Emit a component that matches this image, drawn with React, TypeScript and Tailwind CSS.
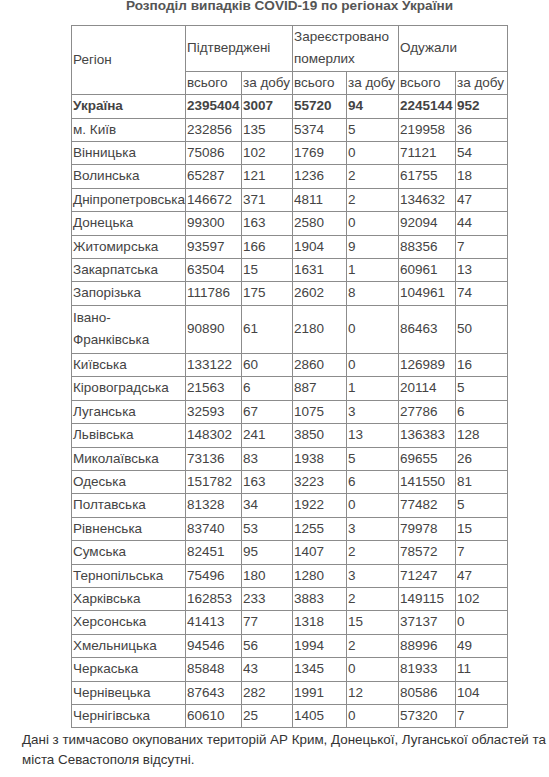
import React from 'react';

type Row = [string, number, number, number, number, number, number];

const rows: Row[] = [
  ['м. Київ', 232856, 135, 5374, 5, 219958, 36],
  ['Вінницька', 75086, 102, 1769, 0, 71121, 54],
  ['Волинська', 65287, 121, 1236, 2, 61755, 18],
  ['Дніпропетровська', 146672, 371, 4811, 2, 134632, 47],
  ['Донецька', 99300, 163, 2580, 0, 92094, 44],
  ['Житомирська', 93597, 166, 1904, 9, 88356, 7],
  ['Закарпатська', 63504, 15, 1631, 1, 60961, 13],
  ['Запорізька', 111786, 175, 2602, 8, 104961, 74],
  ['Івано-Франківська', 90890, 61, 2180, 0, 86463, 50],
  ['Київська', 133122, 60, 2860, 0, 126989, 16],
  ['Кіровоградська', 21563, 6, 887, 1, 20114, 5],
  ['Луганська', 32593, 67, 1075, 3, 27786, 6],
  ['Львівська', 148302, 241, 3850, 13, 136383, 128],
  ['Миколаївська', 73136, 83, 1938, 5, 69655, 26],
  ['Одеська', 151782, 163, 3223, 6, 141550, 81],
  ['Полтавська', 81328, 34, 1922, 0, 77482, 5],
  ['Рівненська', 83740, 53, 1255, 3, 79978, 15],
  ['Сумська', 82451, 95, 1407, 2, 78572, 7],
  ['Тернопільська', 75496, 180, 1280, 3, 71247, 47],
  ['Харківська', 162853, 233, 3883, 2, 149115, 102],
  ['Херсонська', 41413, 77, 1318, 15, 37137, 0],
  ['Хмельницька', 94546, 56, 1994, 2, 88996, 49],
  ['Черкаська', 85848, 43, 1345, 0, 81933, 11],
  ['Чернівецька', 87643, 282, 1991, 12, 80586, 104],
  ['Чернігівська', 60610, 25, 1405, 0, 57320, 7],
];

const td = 'border border-[#8c8c8c] p-0 pl-px align-middle whitespace-nowrap overflow-visible';

export default function App() {
  return (
    <div className="min-h-screen bg-white font-['Liberation_Sans',Arial,sans-serif]">
      <div className="ml-[71px] w-[437px]">
        <h1 className="text-center font-bold text-[13.6px] leading-[10px] text-[#555] pt-px pb-[14px]">
          Розподіл випадків COVID-19 по регіонах України
        </h1>

        <table className="table-fixed border-collapse w-[437px] text-[13.5px] text-[#444] leading-[22.4px]">
          <colgroup>
            <col className="w-[114px]" />
            <col className="w-[56px]" />
            <col className="w-[51px]" />
            <col className="w-[54px]" />
            <col className="w-[52px]" />
            <col className="w-[57px]" />
            <col className="w-[52px]" />
          </colgroup>
          <thead>
            <tr>
              <th rowSpan={2} className={`${td} text-left font-normal`}>Регіон</th>
              <th colSpan={2} className={`${td} text-left font-normal`}>Підтверджені</th>
              <th colSpan={2} className="border border-[#8c8c8c] p-0 pl-px text-left font-normal align-middle">
                Зареєстровано
                <br />
                померлих
              </th>
              <th colSpan={2} className={`${td} text-left font-normal`}>Одужали</th>
            </tr>
            <tr>
              <th className={`${td} text-left font-normal`}>всього</th>
              <th className={`${td} text-left font-normal`}>за добу</th>
              <th className={`${td} text-left font-normal`}>всього</th>
              <th className={`${td} text-left font-normal`}>за добу</th>
              <th className={`${td} text-left font-normal`}>всього</th>
              <th className={`${td} text-left font-normal`}>за добу</th>
            </tr>
          </thead>
          <tbody>
            <tr className="font-bold">
              <td className={td}>Україна</td>
              <td className={td}>2395404</td>
              <td className={td}>3007</td>
              <td className={td}>55720</td>
              <td className={td}>94</td>
              <td className={td}>2245144</td>
              <td className={td}>952</td>
            </tr>
            {rows.map(([name, ...nums]) => (
              <tr key={name}>
                {name === 'Івано-Франківська' ? (
                  <td className="border border-[#8c8c8c] p-0 pl-px align-middle h-[48px]">
                    Івано-
                    <br />
                    Франківська
                  </td>
                ) : (
                  <td className={td}>{name}</td>
                )}
                {nums.map((n, i) => (
                  <td key={i} className={td}>
                    {n}
                  </td>
                ))}
              </tr>
            ))}
          </tbody>
        </table>
      </div>

      <p className="ml-[22px] w-[527px] mt-[2px] text-[13.4px] leading-[20px] text-[#333]">
        Дані з тимчасово окупованих територій АР Крим, Донецької, Луганської областей та міста
        Севастополя відсутні.
      </p>
    </div>
  );
}
